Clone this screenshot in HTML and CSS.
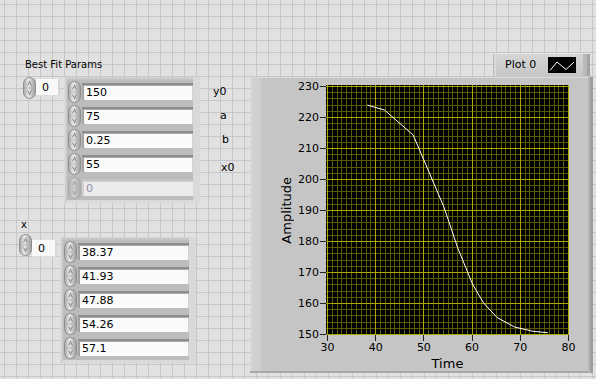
FILE: index.html
```html
<!DOCTYPE html>
<html>
<head>
<meta charset="utf-8">
<title>Best Fit Params</title>
<link rel="stylesheet" href="styles.css">
</head>
<body>
<svg class="defs" width="0" height="0" aria-hidden="true">
  <defs>
    <linearGradient id="sg" x1="0" x2="1" y1="0" y2="0">
      <stop offset="0" stop-color="#a2a2a2"/>
      <stop offset=".4" stop-color="#e9e9e9"/>
      <stop offset="1" stop-color="#9a9a9a"/>
    </linearGradient>
    <symbol id="spin" viewBox="0 0 13 22">
      <rect x=".5" y=".5" width="12" height="21" rx="6" fill="url(#sg)" stroke="#8e8e8e"/>
      <path d="M4.6 8.6 L6.5 4.4 L8.4 8.6" fill="none" stroke="#707070" stroke-width=".8"/>
      <path d="M4.6 13.4 L6.5 17.6 L8.4 13.4" fill="none" stroke="#707070" stroke-width=".8"/>
      <path d="M2.5 11H10.5" stroke="#9a9a9a" stroke-width=".6"/>
    </symbol>
  </defs>
</svg>
<main class="panel">
  <section class="leftcol">
    <div class="cap cap-bfp">Best Fit Params</div>
    <div class="ctlrow row-bfp">
      <div class="index">
        <svg class="spin"><use href="#spin"/></svg>
        <div class="idxbox">0</div>
      </div>
      <div class="arr arr-bfp">
        <div class="el"><svg class="spin"><use href="#spin"/></svg><div class="field">150</div></div>
        <div class="el"><svg class="spin"><use href="#spin"/></svg><div class="field">75</div></div>
        <div class="el"><svg class="spin"><use href="#spin"/></svg><div class="field">0.25</div></div>
        <div class="el"><svg class="spin"><use href="#spin"/></svg><div class="field">55</div></div>
        <div class="el dis"><svg class="spin"><use href="#spin"/></svg><div class="field">0</div></div>
      </div>
      <div class="names">
        <div class="nm nm-y0">y0</div>
        <div class="nm nm-a">a</div>
        <div class="nm nm-b">b</div>
        <div class="nm nm-x0">x0</div>
      </div>
    </div>
    <div class="cap cap-x">x</div>
    <div class="ctlrow row-x">
      <div class="index index-x">
        <svg class="spin"><use href="#spin"/></svg>
        <div class="idxbox idxbox-x">0</div>
      </div>
      <div class="arr arr-x">
        <div class="el"><svg class="spin"><use href="#spin"/></svg><div class="field">38.37</div></div>
        <div class="el"><svg class="spin"><use href="#spin"/></svg><div class="field">41.93</div></div>
        <div class="el"><svg class="spin"><use href="#spin"/></svg><div class="field">47.88</div></div>
        <div class="el"><svg class="spin"><use href="#spin"/></svg><div class="field">54.26</div></div>
        <div class="el"><svg class="spin"><use href="#spin"/></svg><div class="field">57.1</div></div>
      </div>
    </div>
  </section>
  <section class="rightcol">
    <div class="legend">
      <span class="lgtext">Plot 0</span>
      <svg class="swatch" viewBox="0 0 28 16" width="28" height="16">
        <rect width="28" height="16" fill="#000"/>
        <polyline points="2,13.5 9,5 18,12.5 26,5" fill="none" stroke="#fff" stroke-width="1"/>
      </svg>
    </div>
    <div class="graph">
      <div class="ylabel">Amplitude</div>
      <div class="yticks">
        <div class="ytick"><span>230</span></div>
        <div class="ytick"><span>220</span></div>
        <div class="ytick"><span>210</span></div>
        <div class="ytick"><span>200</span></div>
        <div class="ytick"><span>190</span></div>
        <div class="ytick"><span>180</span></div>
        <div class="ytick"><span>170</span></div>
        <div class="ytick"><span>160</span></div>
        <div class="ytick"><span>150</span></div>
      </div>
      <div class="ymarks">
        <i></i><i></i><i></i><i></i><i></i><i></i><i></i><i></i><i></i>
      </div>
      <svg class="plot" width="243" height="250" viewBox="0 0 243 250">
        <rect width="243" height="250" fill="#000"/>
        <path id="minor" d="" stroke="#5a5a00" stroke-width="1" fill="none"/>
        <path id="major" d="" stroke="#a9a900" stroke-width="1" fill="none"/>
        <polyline id="curve" points="" fill="none" stroke="#fff" stroke-width="1"/>
      </svg>
      <div class="xmarks"><i></i><i></i><i></i><i></i><i></i><i></i></div>
      <div class="xticks">
        <div class="xtick"><span>30</span></div>
        <div class="xtick"><span>40</span></div>
        <div class="xtick"><span>50</span></div>
        <div class="xtick"><span>60</span></div>
        <div class="xtick"><span>70</span></div>
        <div class="xtick"><span>80</span></div>
      </div>
      <div class="xlabel">Time</div>
    </div>
  </section>
</main>
<script src="script.js"></script>
</body>
</html>
```

FILE: styles.css
```css
* { box-sizing: border-box; margin: 0; padding: 0; }
html, body { width: 596px; height: 379px; overflow: hidden; }
body {
  font-family: "DejaVu Sans", "Liberation Sans", sans-serif;
  color: #000;
  background-color: #e1e1e1;
  background-image:
    linear-gradient(to right, #c7c7c7 1px, transparent 1px),
    linear-gradient(to bottom, #c7c7c7 1px, transparent 1px);
  background-size: 12px 12px;
  background-position: 4px 4px;
}
.defs { display: block; width: 0; height: 0; overflow: hidden; }

.panel { display: flex; height: 379px; }

/* ---------- left column ---------- */
.leftcol { flex: 0 0 250px; padding-top: 59px; }
.cap { font-size: 10px; line-height: 12px; }
.cap-bfp { margin-left: 25px; }
.cap-x { margin-left: 21px; margin-top: 16px; }

.ctlrow { display: flex; align-items: flex-start; }
.row-bfp { margin-top: 6px; padding-left: 23px; }
.row-x { margin-top: 3px; padding-left: 19px; }

.index { display: flex; align-items: flex-start; }
.spin { display: block; width: 13px; height: 22px; flex: none; }
.idxbox {
  width: 24px; height: 17px; margin-top: 2px;
  background: #f8f8f8;
  font-size: 11px; line-height: 17px; padding-left: 6px;
  box-shadow: inset -2px 0 0 #d6d6d6, inset 0 -1px 0 #dcdcdc;
}
.idxbox-x { width: 25px; margin-top: 6px; }

.arr {
  display: flex; flex-direction: column;
  width: 136px; padding: 3px 7px 3px 4px;
  background: #bcbcbc;
  box-shadow:
    inset 1px 0 0 #dedede, inset 3px 0 0 #cdcdcd,
    inset -7px 0 0 #d9d9d9, inset 0 -3px 0 #d9d9d9,
    inset 0 1px 0 #d6d6d6, inset 0 3px 0 #c6c6c6;
}
.arr-bfp { margin-left: 4px; }
.arr-x { margin-left: 3px; margin-top: 3px; }

.el { display: flex; align-items: flex-start; height: 24px; }
.el .spin { margin-top: 1px; }
.field {
  width: 111px; height: 17px; margin-top: 3px; margin-left: 1px;
  background: #fafafa;
  font-size: 11px; line-height: 14px; padding: 3px 0 0 4px;
  box-shadow:
    inset 0 2px 0 #8e8e8e, inset 0 3px 0 #a8a8a8,
    inset 2px 0 0 #a2a2a2, inset -1px 0 0 #d4d4d4;
}
.dis .spin { opacity: .45; }
.dis .field {
  background: #ececec; color: #8e8fa6;
  box-shadow: inset 0 2px 0 #c4c4c4, inset 0 3px 0 #d0d0d0, inset 2px 0 0 #cfcfcf;
}

.names { display: flex; flex-direction: column; margin-left: 13px; padding-top: 3px; font-size: 11px; }
.nm { line-height: 24px; }
.nm-a { padding-left: 7px; }
.nm-b { padding-left: 9px; }
.nm-x0 { padding-left: 8px; margin-top: 4px; }

/* ---------- right column ---------- */
.rightcol { flex: 0 0 346px; display: flex; flex-direction: column; }
.legend {
  margin: 53px 0 0 243px; width: 97px; height: 23px;
  display: flex; align-items: center;
  background: linear-gradient(to bottom, #d6d6d6, #c6c6c6);
  box-shadow: inset 0 1px 0 #e4e4e4, inset 1px 0 0 #b8b8b8, inset 3px 0 0 #dadada,
    inset -3px 0 0 #a4a4a4, inset -7px 0 0 #bababa;
}
.lgtext { font-size: 11px; line-height: 14px; margin-left: 12px; }
.swatch { display: block; margin-left: 12px; }

.graph {
  width: 343px; height: 296px; margin-top: 1px; overflow: hidden;
  display: grid;
  grid-template-columns: 44px 26px 6px 243px;
  grid-template-rows: 250px 6px 13px 19px;
  padding-top: 8px;
  background: linear-gradient(to right, #d4d4d4 0, #cecece 10px, #c5c5c5 13px);
  box-shadow: inset -3px 0 0 #9e9e9e, inset -5px 0 0 #b6b6b6,
    inset 0 -2px 0 #a8a8a8, inset 0 1px 0 #dadada, inset 1px 0 0 #dedede;
}
.ylabel {
  grid-column: 1; grid-row: 1;
  justify-self: end; align-self: center;
  writing-mode: vertical-rl; transform: rotate(180deg);
  font-size: 13px; line-height: 15px;
}
.yticks {
  grid-column: 2; grid-row: 1;
  display: flex; flex-direction: column; justify-content: space-between;
  padding: 1px 1px 1px 0;
}
.ytick { height: 0; display: flex; align-items: center; justify-content: flex-end; }
.ytick span, .xtick span { font-size: 11px; line-height: 13px; white-space: nowrap; }
.ymarks {
  grid-column: 3; grid-row: 1;
  display: flex; flex-direction: column; justify-content: space-between;
  padding-top: 1px;
}
.ymarks i { display: block; height: 1px; width: 6px; background: #222; }
.plot { grid-column: 4; grid-row: 1; display: block; }
.xmarks {
  grid-column: 4; grid-row: 2;
  display: flex; justify-content: space-between; padding-left: 1px;
}
.xmarks i { display: block; width: 1px; height: 6px; background: #222; }
.xticks {
  grid-column: 4; grid-row: 3;
  display: flex; justify-content: space-between; padding: 0 .5px 0 1.5px;
}
.xtick { width: 0; display: flex; justify-content: center; }
.xlabel {
  grid-column: 4; grid-row: 4;
  text-align: center; font-size: 13px; line-height: 20px;
}
```

FILE: script.js
```js
(function () {
  var W = 243, H = 250, minor = '', major = '', i, j;
  for (i = 0; i <= 50; i++) {
    var x = Math.round(1 + i * 4.82) + 0.5;
    var s = 'M' + x + ' 0V' + H;
    if (i % 10 === 0) major += s; else minor += s;
  }
  for (j = 0; j <= 40; j++) {
    var y = Math.round(1 + j * 6.2) + 0.5;
    var t = 'M0 ' + y + 'H' + W;
    if (j % 5 === 0) major += t; else minor += t;
  }
  document.getElementById('minor').setAttribute('d', minor);
  document.getElementById('major').setAttribute('d', major);
  var xs = [38.37, 41.93, 47.88, 54.26, 57.1, 60.2, 62.5, 65.3, 68.9, 72.7, 75.8];
  var pts = xs.map(function (v) {
    var a = 150 + 75 / (1 + Math.exp(0.25 * (v - 55)));
    return (1 + (v - 30) * 4.82).toFixed(2) + ',' + (1 + (230 - a) * 3.1).toFixed(2);
  }).join(' ');
  document.getElementById('curve').setAttribute('points', pts);
})();
```
